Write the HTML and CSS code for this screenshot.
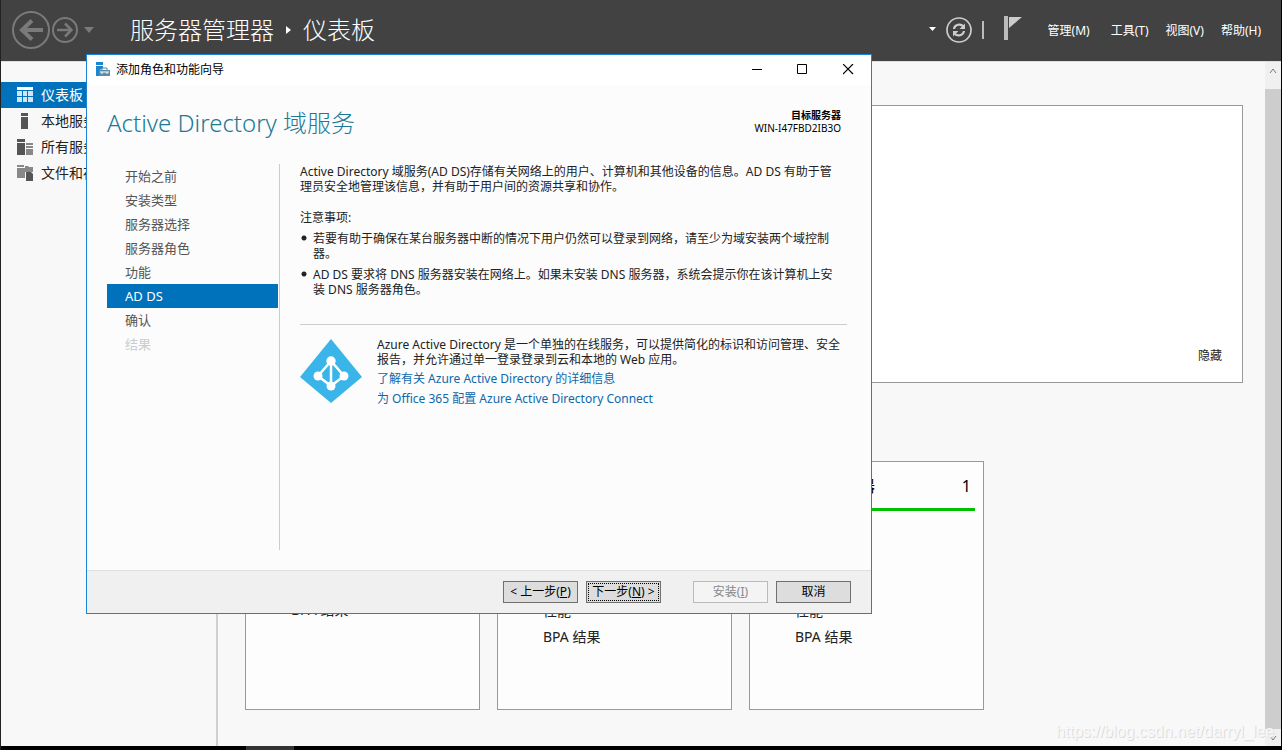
FILE: index.html
```html
<!DOCTYPE html>
<html lang="zh-CN">
<head>
<meta charset="utf-8">
<title>服务器管理器</title>
<link rel="stylesheet" href="styles.css">
</head>
<body>
<div class="app">
  <header class="topbar">
    <div class="history">
      <button class="icon-btn" aria-label="后退"><svg width="38" height="38" viewBox="0 0 38 38" fill="none" stroke="#7a7a7a"><circle cx="19" cy="19" r="18" stroke-width="2"/><path d="M31 19H10" stroke-width="4"/><path d="M20 9.500L10 19l10 9.500" stroke-width="4"/></svg></button>
      <button class="icon-btn" aria-label="前进"><svg width="26" height="26" viewBox="0 0 26 26" fill="none" stroke="#7a7a7a"><circle cx="13" cy="13" r="12" stroke-width="2"/><path d="M5 13h14" stroke-width="2.500"/><path d="M13 6.500L19.500 13 13 19.500" stroke-width="2.500"/></svg></button>
      <button class="icon-btn caret" aria-label="历史记录"><svg width="10" height="6" viewBox="0 0 10 6"><path d="M0 0h10L5 6z" fill="#7a7a7a"/></svg></button>
    </div>
    <h1 class="crumbs"><span>服务器管理器</span><svg width="5" height="8" viewBox="0 0 5 8"><path d="M0 0l5 4-5 4z" fill="#fff"/></svg><span>仪表板</span></h1>
    <div class="tools">
      <button class="icon-btn" aria-label="更多"><svg width="8" height="5" viewBox="0 0 8 5"><path d="M1 0h7L4.500 4z" fill="#fff"/></svg></button>
      <button class="icon-btn" aria-label="刷新"><svg width="26" height="26" viewBox="0 0 26 26" fill="none" stroke="#ccc"><circle cx="13" cy="13" r="12" stroke-width="1.700"/><path d="M8 12c.5-4.500 6.500-6 9.500-2.500M18 14c-.5 4.500-6.500 6-9.500 2.500" stroke-width="2.200"/><path d="M19 6.500V12h-5.500zM7 19.500V14h5.500z" fill="#ccc" stroke="none"/></svg></button>
      <span class="bar"></span>
      <button class="icon-btn flag" aria-label="通知"><svg width="18" height="24" viewBox="0 0 18 24"><path d="M0 0h4v24H0z" fill="#bbb"/><path d="M5 1h13L5 12z" fill="#ccc"/></svg></button>
    </div>
    <nav class="menu">
      <button>管理(M)</button><button>工具(T)</button><button>视图(V)</button><button>帮助(H)</button>
    </nav>
  </header>

  <div class="workspace">
    <nav class="sidebar">
      <a class="side-item current" href="#"><svg width="16" height="16" viewBox="0 0 16 16"><path d="M0 0h16v3H0z" fill="#fff"/><path d="M0 4h5v5H0zM0 10h5v5H0zM6 4h4v5H6zM6 10h4v5H6zM11 4h5v5h-5zM11 10h5v5h-5z" fill="#cfe4f4"/></svg><span>仪表板</span></a>
      <a class="side-item" href="#"><svg width="16" height="16" viewBox="0 0 16 16" fill="#555"><path d="M4 0h7v3H4zM4 4h7v12H4z"/></svg><span>本地服务器</span></a>
      <a class="side-item" href="#"><svg width="16" height="16" viewBox="0 0 16 16"><path d="M0 0h8v3H0zM0 4h8v12H0z" fill="#555"/><path d="M9 4h7v2H9zM9 7h7v2H9zM9 10h7v6H9z" fill="#888"/></svg><span>所有服务器</span></a>
      <a class="side-item" href="#"><svg width="16" height="16" viewBox="0 0 16 16"><path d="M0 0h7v2H0zM0 3h8v10H0z" fill="#888"/><path d="M8 1h3l1 1h4v5H8z" fill="#888"/><path d="M9 7h5l2 2v7H9z" fill="#555"/></svg><span>文件和存储服务</span></a>
    </nav>
    <main class="content">
      <section class="welcome"><button class="hide">隐藏</button></section>
      <div class="tiles">
        <section class="tile short"><ul><li>BPA 结果</li></ul></section>
        <section class="tile"><ul><li>性能</li><li>BPA 结果</li></ul></section>
        <section class="tile"><h2><span>所有服务器</span><span>1</span></h2><ul><li>性能</li><li>BPA 结果</li></ul></section>
      </div>
    </main>
    <div class="scrollbar">
      <button aria-label="向上滚动"><svg width="8" height="6" viewBox="0 0 8 6"><path d="M1 5l3-4 3 4" fill="none" stroke="#777"/></svg></button>
      <div class="thumb"></div>
      <button class="down" aria-label="向下滚动"><svg width="8" height="6" viewBox="0 0 8 6"><path d="M1 1l3 4 3-4" fill="none" stroke="#777"/></svg></button>
    </div>
  </div>
  <div class="taskbar"><div class="task"></div></div>

  <div class="dialog" role="dialog" aria-labelledby="dialog-title">
    <div class="titlebar">
      <svg width="15" height="14" viewBox="0 0 15 14"><path d="M0 0h7v3H0zM0 4h7v2L4 8v6H0z" fill="#1a86d0"/><path d="M3 8h11v6H3z" fill="#5d8aa5"/><path d="M6 8V6h5v2" fill="none" stroke="#5d8aa5"/><path d="M4 10h9M6 10v2M11 10v2" stroke="#fff"/></svg>
      <span id="dialog-title" class="caption">添加角色和功能向导</span>
      <button aria-label="最小化"><svg width="11" height="11" viewBox="0 0 11 11"><path d="M1 5.500h10" stroke="#000"/></svg></button>
      <button aria-label="最大化"><svg width="11" height="11" viewBox="0 0 11 11"><path d="M.5.5h9v9h-9z" fill="none" stroke="#000"/></svg></button>
      <button aria-label="关闭"><svg width="11" height="11" viewBox="0 0 11 11"><path d="M0 0l10 10M10 0L0 10" stroke="#000" stroke-width="1.200"/></svg></button>
    </div>
    <div class="head">
      <h2>Active Directory 域服务</h2>
      <p class="target"><b>目标服务器</b><br>WIN-I47FBD2IB3O</p>
    </div>
    <div class="wizard">
      <ol class="steps">
        <li>开始之前</li><li>安装类型</li><li>服务器选择</li><li>服务器角色</li><li>功能</li><li class="active">AD DS</li><li>确认</li><li class="off">结果</li>
      </ol>
      <div class="page">
        <p>Active Directory 域服务(AD DS)存储有关网络上的用户、计算机和其他设备的信息。AD DS 有助于管<br>理员安全地管理该信息，并有助于用户间的资源共享和协作。</p>
        <p class="notes-title">注意事项:</p>
        <ul class="notes">
          <li>若要有助于确保在某台服务器中断的情况下用户仍然可以登录到网络，请至少为域安装两个域控制<br>器。</li>
          <li>AD DS 要求将 DNS 服务器安装在网络上。如果未安装 DNS 服务器，系统会提示你在该计算机上安<br>装 DNS 服务器角色。</li>
        </ul>
        <div class="azure">
          <svg width="62" height="64" viewBox="0 0 62 64"><path d="M31 0l31 38-31 26L0 38z" fill="#3ab5e9"/><path d="M31 22v25M31 22L18 37l13 10 13-10z" fill="none" stroke="#fff" stroke-width="2.500"/><g fill="#fff"><circle cx="31" cy="22" r="4.700"/><circle cx="18" cy="37" r="4.500"/><circle cx="44" cy="37" r="4.500"/><circle cx="31" cy="47" r="4.500"/></g></svg>
          <div>
            <p>Azure Active Directory 是一个单独的在线服务，可以提供简化的标识和访问管理、安全<br>报告，并允许通过单一登录登录到云和本地的 Web 应用。</p>
            <div class="links">
              <a href="#">了解有关 Azure Active Directory 的详细信息</a>
              <a href="#">为 Office 365 配置 Azure Active Directory Connect</a>
            </div>
          </div>
        </div>
      </div>
    </div>
    <div class="footer">
      <button>&lt; 上一步(<u>P</u>)</button>
      <button class="focus">下一步(<u>N</u>) &gt;</button>
      <button class="gap" disabled>安装(<u>I</u>)</button>
      <button>取消</button>
    </div>
  </div>
  <div class="watermark">https://blog.csdn.net/darryl_lee</div>
</div>
</body>
</html>
```
FILE: styles.css
```css
* { box-sizing: border-box; }
body, h1, h2, p, ul, ol { margin: 0; padding: 0; }
body, button { font-family: "Noto Sans", "Noto Sans CJK SC", sans-serif; font-size: 12px; }
button { padding: 0; border: 0; background: none; color: inherit; white-space: nowrap; }
ul, ol { list-style: none; }
a { text-decoration: none; }
svg { display: block; flex: none; }

.app {
  position: relative;
  min-height: 100vh;
  display: flex;
  flex-direction: column;
  overflow: hidden;
  background: #f8f8f8;
  border-left: 1px solid #222;
  border-right: 1px solid #000;
}

.topbar {
  display: flex;
  align-items: center;
  height: 61px;
  padding: 0 20px 2px 11px;
  background: #424242;
  color: #fff;
}
.history { display: flex; align-items: center; gap: 2px; }
.caret { margin-left: 4px; }
.crumbs {
  display: flex;
  align-items: center;
  gap: 12px;
  margin-left: 36px;
  font-size: 24px;
  font-weight: 300;
  line-height: 36px;
}
.tools { display: flex; align-items: center; gap: 10px; margin-left: auto; }
.bar { width: 2px; height: 18px; background: #bbb; }
.flag { margin: -4px 0 0 10px; }
.menu { display: flex; gap: 17px; margin-left: 26px; }
.menu button:first-child { margin-right: 4px; }

.workspace { flex: 1; display: flex; border-top: 1px solid #ddd; }
.sidebar { width: 217px; padding-top: 20px; border-right: 2px solid #d0d0d0; }
.side-item {
  display: flex;
  align-items: center;
  gap: 8px;
  height: 26px;
  padding-left: 16px;
  font-size: 14px;
  line-height: 20px;
  color: #222;
}
.current { background: #0072bc; color: #fff; }

.content { flex: 1; padding: 43px 22px 36px 27px; }
.welcome {
  display: flex;
  justify-content: flex-end;
  align-items: flex-end;
  height: 278px;
  padding: 18px 20px;
  background: #fff;
  border: 1px solid #999;
}
.hide { color: #222; }
.tiles { display: flex; gap: 17px; margin-top: 78px; }
.tile {
  display: flex;
  flex-direction: column;
  width: 235px;
  height: 249px;
  padding: 0 8px 59px;
  background: #fdfdfd;
  border: 1px solid #999;
}
.short { padding-bottom: 86px; }
.tile h2 {
  display: flex;
  justify-content: space-between;
  height: 49px;
  padding: 12px 4px 0 37px;
  border-bottom: 3px solid #00c000;
  font-size: 16px;
  font-weight: 400;
  line-height: 24px;
}
.tile ul { margin-top: auto; padding-left: 37px; }
.tile li { font-size: 14px; line-height: 26px; color: #222; }

.scrollbar { width: 16px; display: flex; flex-direction: column; background: #f0f0f0; }
.scrollbar button { display: flex; justify-content: center; align-items: center; height: 27px; padding-bottom: 10px; }
.scrollbar .down { height: 17px; padding: 0; }
.thumb { flex: 1; background: #cdcdcd; }
.taskbar { height: 4px; padding-left: 245px; background: #000; }
.task { width: 48px; height: 4px; background: #333; }

.dialog {
  position: absolute;
  left: 85px;
  top: 54px;
  width: 786px;
  height: 560px;
  display: flex;
  flex-direction: column;
  background: #fcfcfc;
  border: 1px solid #1883d7;
  color: #222;
  white-space: nowrap;
}
.titlebar { display: flex; align-items: center; height: 30px; padding: 0 0 2px 9px; background: #fff; color: #000; }
.caption { flex: 1; margin-left: 5px; }
.titlebar button { display: flex; justify-content: center; width: 46px; }
.head { display: flex; justify-content: space-between; align-items: flex-start; height: 79px; padding: 20px 30px 0 20px; }
.head h2 { font-size: 24px; font-weight: 300; line-height: 36px; color: #1d7a96; }
.target { padding-top: 4px; font-size: 10px; line-height: 13px; text-align: right; color: #000; }
.wizard { flex: 1; display: flex; padding: 0 24px 20px 20px; }
.steps { width: 173px; padding-right: 1px; border-right: 1px solid #ccc; font-size: 13px; line-height: 24px; color: #555; }
.steps li { padding-left: 18px; }
.steps .active { background: #0072bc; color: #fff; }
.steps .off { color: #ccc; }
.page { flex: 1; padding-left: 20px; line-height: 15px; }
.notes-title { margin-top: 16px; }
.notes { margin-top: 6px; }
.notes li { margin-bottom: 6px; padding-left: 13px; background: radial-gradient(circle at 4px 7px, #222 2px, transparent 3px); }
.azure { display: flex; gap: 15px; margin-top: 27px; padding-top: 12px; border-top: 1px solid #ccc; }
.azure svg { margin-top: 2px; }
.links { padding-top: 2px; }
.azure a { display: block; line-height: 20px; color: #0e68ab; }
.footer { display: flex; align-items: center; justify-content: flex-end; gap: 8px; height: 43px; padding-right: 20px; background: #f0f0f0; border-top: 1px solid #dfdfdf; }
.footer button { width: 75px; height: 22px; background: #ddd; border: 1px solid #707070; color: #000; line-height: 20px; }
.footer .focus { outline: 1px dotted #000; outline-offset: -3px; }
.footer .gap { margin-left: 24px; }
.footer button:disabled { background: #f4f4f4; border-color: #bbb; color: #888; }

.watermark {
  position: absolute;
  right: 7px;
  bottom: 9px;
  font-family: "Liberation Sans", Arial, sans-serif;
  font-size: 16px;
  line-height: 18px;
  color: #f8f8f8;
  text-shadow: 1px 1px 0 #dcdcdc;
}
```
